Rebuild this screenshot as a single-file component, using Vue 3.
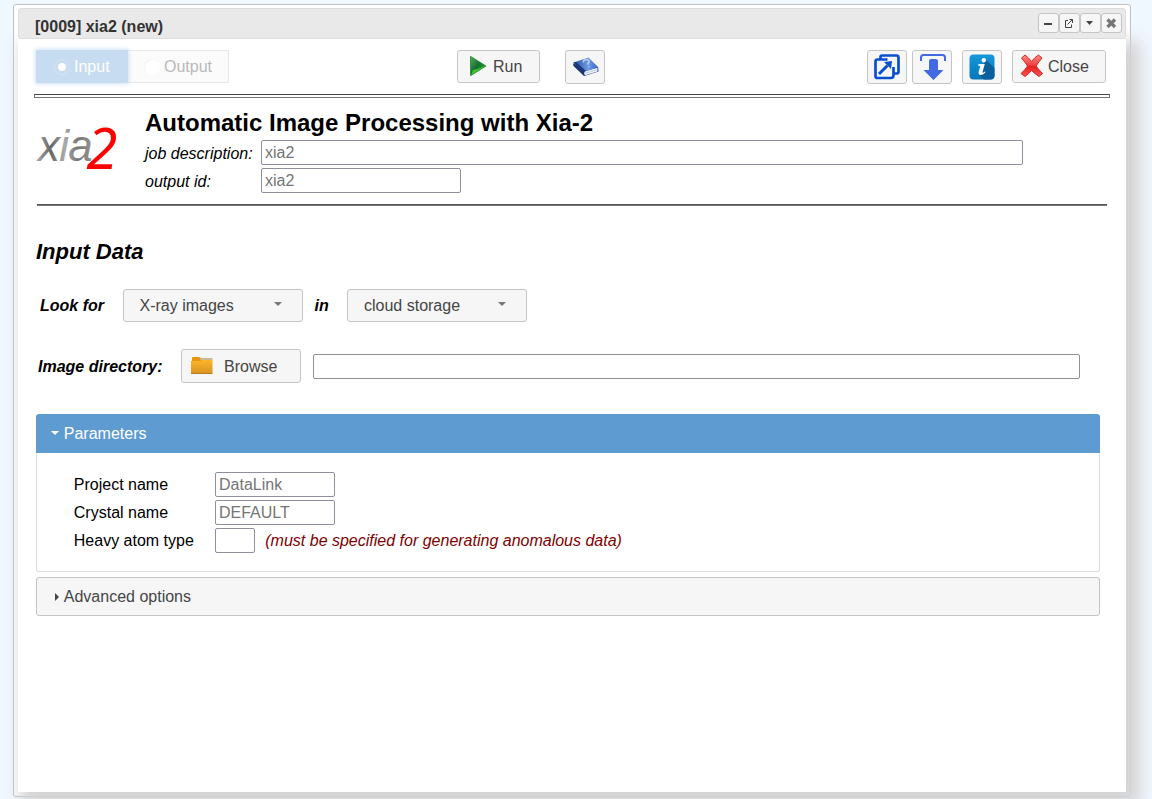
<script setup>
import { ref } from 'vue'

const mode = ref('input')
const source = ref('X-ray images')
const storage = ref('cloud storage')
const directory = ref('')
const fields = [
  { label: 'Project name', hint: 'DataLink', size: 'wide' },
  { label: 'Crystal name', hint: 'DEFAULT', size: 'wide' },
  { label: 'Heavy atom type', hint: '', size: 'narrow', note: '(must be specified for generating anomalous data)' },
]
</script>

<template>
  <div class="desktop">
    <section class="dialog">
      <header class="titlebar">
        <span class="title">[0009] xia2 (new)</span>
        <div class="winbuttons">
          <button><svg width="19" height="18"><path d="M5 9h8v2H5z" fill="#444" /></svg></button>
          <button>
            <svg width="19" height="18" fill="none" stroke="#444">
              <path d="M8 6.500H5.500V13.500H11.500V10.500M7.500 10.500L12.500 5.500M9.500 5.500H12.500V9" />
            </svg>
          </button>
          <button><svg width="19" height="18"><path d="M5 7h7l-3.500 4z" fill="#444" /></svg></button>
          <button><svg width="19" height="18"><path d="M5.500 5.500L13 13M13 5.500L5.500 13" stroke="#777" stroke-width="3.300" /></svg></button>
        </div>
      </header>

      <main class="content">
        <div class="toolbar">
          <div class="modes">
            <button class="mode on" @click="mode = 'input'"><i class="radio"></i>Input</button>
            <button class="mode off" @click="mode = 'output'"><i class="radio"></i>Output</button>
          </div>
          <button class="btn run">
            <svg width="18" height="22" viewBox="0 0 18 22">
              <defs>
                <linearGradient id="play" x1="0" y1="0" x2="1" y2="1">
                  <stop offset="0" stop-color="#4fae55" /><stop offset=".48" stop-color="#146d35" />
                  <stop offset=".55" stop-color="#19802b" /><stop offset="1" stop-color="#3bc22b" />
                </linearGradient>
              </defs>
              <path d="M1.500 1.300L17 11L1.500 20.700z" fill="url(#play)" stroke="#23862f" stroke-width=".8" stroke-linejoin="round" />
              <path d="M2 20L4 15Q10 14 16 11z" fill="#42c52c" />
            </svg>
            <span>Run</span>
          </button>
          <button class="btn icon help">
            <svg width="28" height="22" viewBox="0 0 28 22">
              <defs>
                <linearGradient id="book" x1="0" y1="0" x2="1" y2="0">
                  <stop offset="0" stop-color="#244ba0" /><stop offset=".6" stop-color="#6f9be2" /><stop offset="1" stop-color="#3565bc" />
                </linearGradient>
              </defs>
              <path d="M1.500 7Q.5 9 2 10.500L12 20L26.500 15.500L26 11L13 14z" fill="#183575" />
              <path d="M12.500 15.500L25.500 11.500L25.500 15.500L13 19.200Q11.500 17.500 12.500 15.500" fill="#edf3ff" />
              <path d="M13 17.300L25.500 13.500" stroke="#a8b9d9" stroke-width=".7" />
              <path d="M1.500 6.500L16.500 1.500L26.500 11.500L12.500 15.500z" fill="url(#book)" />
              <path d="M1.500 6.500L3.500 6L14 15.100L12.500 15.500z" fill="#172f70" />
              <path d="M11.500 6.500Q11 4 13.500 3.500Q17.500 3.500 17 6Q16 7.300 15.300 8.500M16.500 10.500l1 .2" fill="none" stroke="#b4cdf5" stroke-width="1.500" />
            </svg>
          </button>
          <button class="btn icon clone">
            <svg width="28" height="28" viewBox="0 0 28 28" fill="none" stroke="#0a4fd0" stroke-width="2.700">
              <path d="M7.500 6V4Q7.500 2.500 9 2.500H23.500Q25.500 2.500 25.500 4.500V18.500Q25.500 20.500 23.500 20.500H21" />
              <path d="M14.500 6.500H4.500Q2.500 6.500 2.500 8.500V23Q2.500 25 4.500 25H18Q20.500 25 20.500 22V14" />
              <path d="M6 21L14.500 12.500" stroke-width="3" />
              <path d="M11 9L19 8L18 16z" fill="#0a4fd0" stroke="none" />
            </svg>
          </button>
          <button class="btn icon export">
            <svg width="28" height="28" viewBox="0 0 28 28">
              <path d="M2 8V4.500Q2 2 4.500 2H23.500Q26 2 26 4.500V8" fill="none" stroke="#4269e2" stroke-width="2" />
              <path d="M10 8Q10 6 12 6H16.500Q19 6 19 8V17H24.500L14.500 27L4.500 17H10z" fill="#4269e2" />
            </svg>
          </button>
          <button class="btn icon info">
            <svg width="26" height="26" viewBox="0 0 26 26">
              <defs>
                <linearGradient id="tile" x1="0" y1="0" x2="0" y2="1">
                  <stop offset="0" stop-color="#1598d9" /><stop offset="1" stop-color="#0876b9" />
                </linearGradient>
              </defs>
              <rect x=".5" y=".5" width="25" height="25" rx="4" fill="url(#tile)" />
              <path d="M16 5L25.500 14V21.500Q25.500 25.500 21.500 25.500H15L9.500 20L13 17z" fill="#0a609c" />
              <circle cx="14.800" cy="6.200" r="2.200" fill="#fff" />
              <path d="M9.500 10H15.800L13.500 18Q13.200 19 14.200 18.700L16.200 17.300V18.800Q13.500 21.200 11 21Q9 20.500 9.600 18L11.300 12L9.300 11.800z" fill="#fff" />
            </svg>
          </button>
          <button class="btn close">
            <svg width="24" height="24" viewBox="0 0 24 24">
              <defs>
                <linearGradient id="cross" x1="0" y1="0" x2="0" y2="1">
                  <stop offset="0" stop-color="#ff8a84" /><stop offset=".45" stop-color="#f04343" />
                  <stop offset=".55" stop-color="#e92020" /><stop offset="1" stop-color="#ff5252" />
                </linearGradient>
              </defs>
              <path d="M1.500 4L5 1Q8.500 3.500 11.500 7.500Q15 3 18.500 1L22 4Q19 7.500 16 12Q19 16 22.500 19.500L19 22.500Q15 20 11.500 16.500Q8.500 20 5 22.500L1 19.500Q5 16 7.500 12Q5 8 1.500 4z" fill="url(#cross)" stroke="#c92c2c" stroke-width="1" stroke-linejoin="round" />
            </svg>
            <span>Close</span>
          </button>
        </div>
        <div class="double-rule"></div>

        <div class="taskhead">
          <svg class="logo" width="84" height="84" viewBox="0 -14 84 84">
            <defs>
              <linearGradient id="steel" gradientUnits="userSpaceOnUse" x1="3" y1="0" x2="56" y2="0">
                <stop offset="0" stop-color="#a0a0a0" /><stop offset=".25" stop-color="#666" />
                <stop offset=".5" stop-color="#aaa" /><stop offset=".75" stop-color="#777" /><stop offset="1" stop-color="#909090" />
              </linearGradient>
            </defs>
            <text x="3" y="43"><tspan class="xia">xia</tspan><tspan class="two" x="51.500" y="51">2</tspan></text>
          </svg>
          <div class="taskinfo">
            <h1>Automatic Image Processing with Xia-2</h1>
            <div class="inforow"><label>job description:</label><input class="job" placeholder="xia2" /></div>
            <div class="inforow"><label>output id:</label><input class="oid" placeholder="xia2" /></div>
          </div>
        </div>
        <div class="rule"></div>

        <h2>Input Data</h2>
        <div class="lookrow">
          <b class="look">Look for</b>
          <button class="select first">{{ source }}<i class="caret"></i></button>
          <b class="in">in</b>
          <button class="select second">{{ storage }}<i class="caret"></i></button>
        </div>
        <div class="dirrow">
          <b>Image directory:</b>
          <button class="btn browse">
            <svg width="24" height="20" viewBox="0 0 24 20">
              <defs>
                <linearGradient id="folder" x1="0" y1="0" x2="0" y2="1">
                  <stop offset="0" stop-color="#fbb62b" /><stop offset="1" stop-color="#dc9422" />
                </linearGradient>
              </defs>
              <path d="M2 2Q2 1 3 1H9L11 2H22V9H2z" fill="#e89510" />
              <path d="M10.500 2H22.500V4H10z" fill="#c9b99a" />
              <path d="M1 5H10L12 4H22.500V17.500H1z" fill="url(#folder)" />
              <path d="M1 17.500H22.500" stroke="#b77b20" />
            </svg>
            <span>Browse</span>
          </button>
          <input v-model="directory" />
        </div>

        <div class="accordion open"><i class="tri down"></i>Parameters</div>
        <div class="panel">
          <div v-for="f in fields" :key="f.label" class="field">
            <label>{{ f.label }}</label>
            <input :class="f.size" :placeholder="f.hint" />
            <em v-if="f.note">{{ f.note }}</em>
          </div>
        </div>
        <div class="accordion closed"><i class="tri right"></i>Advanced options</div>
      </main>
    </section>
  </div>
</template>

<style>
html, body { margin: 0; overflow: hidden; background: #f0f8ff; }
</style>

<style scoped>
* { box-sizing: border-box; }
.desktop { height: 799px; overflow: hidden; padding: 4px 0 0 13px; background: #f0f8ff; font: 16px/18px "Liberation Sans", Arial, sans-serif; color: #000; }
button, input { font: inherit; margin: 0; }
button { padding: 0; color: #454545; }
svg { display: block; flex: none; }
.dialog { width: 1118px; height: 793px; padding: 3px 4px 4px; border: 1px solid #c0c0c0; border-radius: 3px; background: #fff; }
.titlebar { height: 31px; display: flex; justify-content: space-between; padding: 4px 3px 0 16px; border: 1px solid #ddd; border-radius: 3px; background: #e9e9e9; color: #333; }
.title { font-weight: bold; margin-top: 5px; }
.winbuttons { display: flex; }
.winbuttons button { width: 21px; height: 20px; border: 1px solid #c5c5c5; border-radius: 3px; background: #f6f6f6; }
.content { height: 753px; padding: 11px 16px 0 18px; background: #fff; box-shadow: 8px 8px 16px 6px #d3d3d3; }
.titlebar, .content { position: relative; }
.titlebar { z-index: 1; }
.toolbar { display: flex; height: 44px; align-items: flex-start; padding-right: 4px; }
.modes { display: flex; width: 193px; height: 33px; }
.mode { display: flex; align-items: center; height: 33px; border: 1px solid #e8e8e8; }
.mode.on { width: 92px; border-color: #c7dcf0; background: #c7dcf0; color: #fff; box-shadow: 0 0 4px 1px #cfe3f5; padding-left: 17px; z-index: 1; }
.mode.off { width: 101px; background: #fbfbfb; border-left: 0; color: #b9b9b9; padding-left: 16px; }
.radio { width: 16px; height: 16px; margin-right: 4px; border-radius: 50%; }
.on .radio { border: 1px solid #d3e4f3; background: radial-gradient(circle, #fff 3.500px, transparent 4.500px); }
.off .radio { background: #fff; box-shadow: inset 1px 1px 1px #f3f3f3; }
.btn { display: flex; align-items: center; border: 1px solid #c5c5c5; border-radius: 3px; background: #f6f6f6; }
.run { width: 83px; height: 33px; margin-left: 228px; padding-left: 11px; }
.run svg { margin-top: -1px; }
.run span { margin-left: 6px; }
.icon { width: 40px; height: 34px; justify-content: center; }
.help { margin-left: 25px; }
.help svg { margin-left: 1px; }
.clone { margin-left: 262px; }
.export { margin-left: 5px; }
.export svg { margin-left: 1px; }
.info { margin-left: 10px; }
.close { width: 94px; height: 33px; margin-left: 10px; padding-left: 7px; }
.close svg { margin-top: -1px; }
.close span { margin-left: 4px; }
.double-rule { height: 4px; width: 1076px; margin-left: -2px; border: 1px solid #777; border-top-color: #444; }
.taskhead { display: flex; height: 106px; }
.logo { margin: 6px 0 0 -1px; overflow: visible; }
.xia { font: italic 44px "Liberation Sans", sans-serif; letter-spacing: -.8px; fill: url(#steel); }
.two { font: italic 56px "Noto Sans", sans-serif; fill: #f00; }
.taskinfo { padding: 11px 0 0 26px; }
h1 { margin: 0; font-size: 24px; line-height: 28px; height: 31px; }
.inforow { display: flex; height: 28px; align-items: flex-start; font-style: italic; }
.inforow label { width: 116px; margin-top: 5px; }
input { height: 25px; border: 1px solid #8f8f9d; border-radius: 2px; padding: 0 3px; background: #fff; outline: 0; }
input::placeholder { color: #757575; opacity: 1; }
.inforow input { font-style: normal; }
.job { width: 762px; }
.oid { width: 200px; }
.rule { width: 1070px; height: 2px; margin-left: 1px; background: linear-gradient(#555 50%, #777 50%); }
h2 { margin: 33px 0 0; font-size: 22px; line-height: 26px; height: 50px; font-style: italic; }
.lookrow { display: flex; height: 60px; align-items: flex-start; font-style: italic; }
.lookrow b { margin-top: 8px; }
.look { width: 83px; margin-left: 4px; }
.in { width: 45px; padding-left: 11.500px; }
.select { position: relative; width: 180px; height: 33px; padding-left: 16px; border: 1px solid #c5c5c5; border-radius: 3px; background: #f6f6f6; text-align: left; font-style: normal; }
.select.first { padding-left: 15.500px; }
.select.second { margin-left: -1px; }
.caret { position: absolute; right: 20px; top: 12px; border: 4px solid transparent; border-top-color: #777; border-bottom: 0; }
.dirrow { display: flex; height: 65px; align-items: flex-start; }
.dirrow b { width: 145px; padding: 9px 0 0 2px; font-style: italic; }
.browse { width: 120px; height: 34px; padding-left: 7.500px; }
.browse span { margin: 2px 0 0 10.500px; }
.dirrow input { width: 767px; margin: 5px 0 0 12px; }
.accordion { display: flex; align-items: center; width: 1064px; height: 39px; border-radius: 3px; padding-left: 15px; }
.open { color: #fff; background: #5e9bd1; border-radius: 3px 3px 0 0; }
.closed { color: #454545; margin-top: 5px; background: #f6f6f6; border: 1px solid #c5c5c5; }
.tri { border: 4px solid transparent; }
.down { border-top-color: #fff; border-bottom: 0; margin: -2px 4.800px 0 0; }
.right { border-left-color: #454545; border-right: 0; margin: 0 4.800px 0 3px; }
.panel { width: 1064px; height: 119px; padding: 19px 0 0 36.800px; border: 1px solid #ddd; border-top: 0; border-radius: 0 0 3px 3px; }
.field { display: flex; height: 28px; align-items: flex-start; }
.field label { width: 141.200px; padding-top: 4px; }
.wide { width: 120px; }
.narrow { width: 40px; }
.field em { margin: 4px 0 0 10.300px; color: #800000; }
</style>
